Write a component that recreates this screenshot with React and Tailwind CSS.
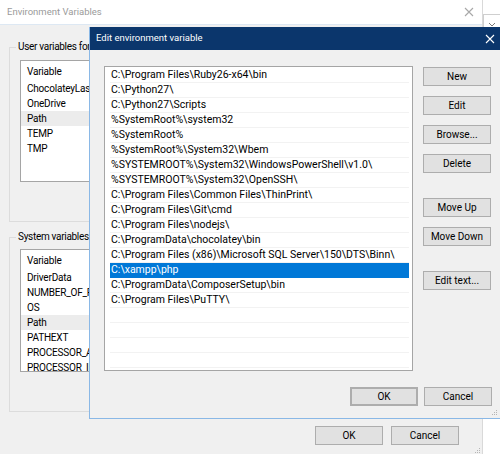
import React from 'react';

const pathItems = [
    'C:\\Program Files\\Ruby26-x64\\bin',
    'C:\\Python27\\',
    'C:\\Python27\\Scripts',
    '%SystemRoot%\\system32',
    '%SystemRoot%',
    '%SystemRoot%\\System32\\Wbem',
    '%SYSTEMROOT%\\System32\\WindowsPowerShell\\v1.0\\',
    '%SYSTEMROOT%\\System32\\OpenSSH\\',
    'C:\\Program Files\\Common Files\\ThinPrint\\',
    'C:\\Program Files\\Git\\cmd',
    'C:\\Program Files\\nodejs\\',
    'C:\\ProgramData\\chocolatey\\bin',
    'C:\\Program Files (x86)\\Microsoft SQL Server\\150\\DTS\\Binn\\',
    'C:\\xampp\\php',
    'C:\\ProgramData\\ComposerSetup\\bin',
    'C:\\Program Files\\PuTTY\\',
    '', '', '', '', '',
];

const userVars = ['ChocolateyLast', 'OneDrive', 'Path', 'TEMP', 'TMP'];
const systemVars = ['DriverData', 'NUMBER_OF_P', 'OS', 'Path', 'PATHEXT', 'PROCESSOR_AR', 'PROCESSOR_ID'];

const font = { fontFamily: 'Roboto, "Liberation Sans", sans-serif' };

const Btn = ({ children, className = '' }) => (
    <div className={`h-[19px] w-[68px] flex items-center justify-center bg-[#e1e1e1] border border-[#adadad] text-[10px] text-black ${className}`}>
        {children}
    </div>
);

const Grip = ({ color = '#b5b5b5' }) => (
    <svg width="8" height="8" viewBox="0 0 8 8">
        {[[6, 2], [6, 4], [4, 4], [6, 6], [4, 6], [2, 6]].map(([x, y]) => (
            <rect key={`${x}${y}`} x={x} y={y} width="1" height="1" fill={color} />
        ))}
    </svg>
);

const Closer = ({ stroke }) => (
    <svg width="10" height="10" viewBox="0 0 10 10">
        <path d="M1 1L9 9M9 1L1 9" stroke={stroke} strokeWidth="1.1" fill="none" />
    </svg>
);

const VarList = ({ items, className }) => (
    <div className={`bg-white border border-[#a5a5a5] overflow-hidden ${className}`}>
        <div className="h-[20px] pl-[6px] flex items-center text-[10px] text-black tracking-[-0.2px]">Variable</div>
        {items.map((v) => (
            <div
                key={v}
                className={`h-[15px] pl-[6px] flex items-center text-[10px] text-black whitespace-nowrap tracking-[-0.2px] ${v === 'Path' ? 'bg-[#ececec]' : ''}`}
            >
                {v}
            </div>
        ))}
    </div>
);

const GroupBox = ({ label, className, children }) => (
    <div className={`relative border border-[#dcdcdc] ${className}`}>
        <span className="absolute -top-[8px] left-[6px] bg-[#f0f0f0] px-[2px] text-[10px] text-black leading-[14px] tracking-[-0.3px]">
            {label}
        </span>
        {children}
    </div>
);

export default function App() {
    return (
        <div className="relative w-[500px] h-[454px] overflow-hidden bg-white flex" style={font}>
            {/* background window */}
            <div className="w-[483px] h-[454px] flex flex-col bg-[#f0f0f0] border-r border-[#d9d9d9]">
                <div className="h-[25px] bg-white flex items-center justify-between pl-[7px] pr-[8px] border-b border-[#dde8f3]">
                    <span className="text-[9.5px] text-[#9a9a9a]">Environment Variables</span>
                    <Closer stroke="#a8a8a8" />
                </div>
                <div className="flex-1 flex flex-col pl-[9px] pt-[22px]">
                    <GroupBox label="User variables for" className="h-[175px] w-[470px] pt-[12px] pl-[10px]">
                        <VarList items={userVars} className="w-[440px] h-[122px]" />
                    </GroupBox>
                    <GroupBox label="System variables" className="mt-[15px] h-[175px] w-[470px] pt-[11px] pl-[10px]">
                        <VarList items={systemVars} className="w-[440px] h-[123px]" />
                    </GroupBox>
                    <div className="flex justify-end gap-[8px] pr-[23px] mt-[14px]">
                        <Btn>OK</Btn>
                        <Btn>Cancel</Btn>
                    </div>
                    <div className="flex justify-end pr-[1px] mt-[1px]">
                        <Grip />
                    </div>
                </div>
            </div>
            <div className="flex-1 pt-[14px]">
                <div className="h-[13px] w-[17px] border-l border-t border-[#cfcfcf] bg-white flex items-end justify-center">
                    <svg width="8" height="5" viewBox="0 0 8 5">
                        <path d="M1 1L4 4L7 1" stroke="#7a7a7a" strokeWidth="1" fill="none" />
                    </svg>
                </div>
            </div>

            {/* foreground dialog */}
            <div className="absolute left-[89px] top-[27px] w-[411px] h-[392px] flex flex-col bg-[#f0f0f0] border-l border-b border-[#8ab8e6]">
                <div className="h-[23px] bg-[#0b366c] flex items-center justify-between pl-[6px] pr-[5px]">
                    <span className="text-[9.5px] text-white">Edit environment variable</span>
                    <Closer stroke="#ffffff" />
                </div>
                <div className="flex pl-[14px] pt-[16px]">
                    <div className="w-[309px] h-[305px] bg-white border border-[#a5a5a5] pl-[5px] pr-[3px] pt-[1px] overflow-hidden">
                        {pathItems.map((p, i) => (
                            <div
                                key={i}
                                className={`h-[15px] pl-[1px] flex items-center text-[10.5px] whitespace-nowrap border-b ${p === 'C:\\xampp\\php' ? 'bg-[#0078d7] text-white border-[#0078d7]' : 'text-black border-[#f2f2f2]'}`}
                            >
                                {p}
                            </div>
                        ))}
                    </div>
                    <div className="flex flex-col pl-[10px] pt-[1px]">
                        <Btn>New</Btn>
                        <Btn className="mt-[10px]">Edit</Btn>
                        <Btn className="mt-[10px]">Browse...</Btn>
                        <Btn className="mt-[10px]">Delete</Btn>
                        <Btn className="mt-[25px]">Move Up</Btn>
                        <Btn className="mt-[10px]">Move Down</Btn>
                        <Btn className="mt-[25px]">Edit text...</Btn>
                    </div>
                </div>
                <div className="flex justify-end gap-[6px] pr-[8px] mt-[16px]">
                    <Btn className="border-[#0078d7] border-2 w-[68px]">OK</Btn>
                    <Btn>Cancel</Btn>
                </div>
                <div className="flex justify-end pr-[2px] mt-[2px]">
                    <Grip />
                </div>
            </div>
        </div>
    );
}
